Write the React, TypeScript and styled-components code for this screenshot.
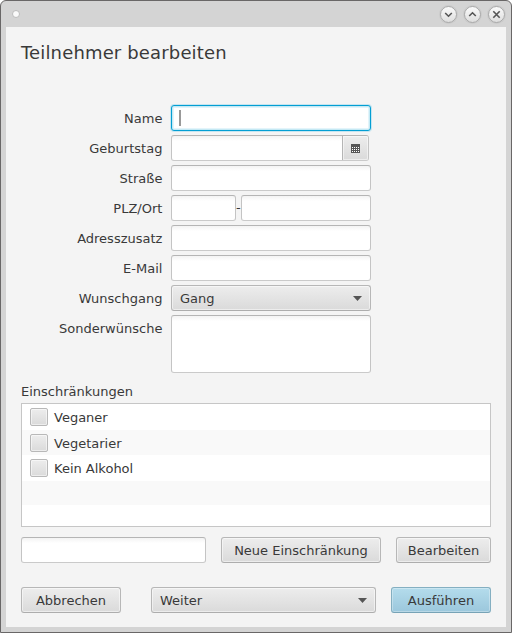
import React from "react";
import styled, { createGlobalStyle, css } from "styled-components";

const GlobalStyle = createGlobalStyle`
  * { box-sizing: border-box; }
  body { margin: 0; background: #fff; overflow: hidden; }
  input, textarea, button { font: inherit; color: inherit; margin: 0; outline: none; }
`;

const Window = styled.div`
  width: 512px;
  height: 633px;
  display: flex;
  flex-direction: column;
  padding: 0 5px 5px;
  background: #d4d4d4;
  border: 1px solid #696767;
  border-radius: 6px 6px 0 0;
  font: 13px/15px "DejaVu Sans", sans-serif;
  color: #393939;
`;

const TitleBar = styled.header`
  height: 26px;
  display: flex;
  align-items: center;
  padding: 0 0 0 6px;
  flex: none;
`;

const MenuDot = styled.span`
  width: 8px;
  height: 8px;
  border-radius: 50%;
  border: 1px solid #bcbcbc;
  background: #fafafa;
  margin-right: auto;
`;

const Controls = styled.div`
  display: flex;
  gap: 7px;
  margin: 1px 1px 0 0;
`;

const RoundButton = styled.button`
  width: 17px;
  height: 17px;
  padding: 0;
  display: flex;
  border: 1px solid #a9a9a9;
  border-radius: 50%;
  background: linear-gradient(#fafafa, #dedede);
  box-shadow: 0 0 0 1px #cbcbcb;

  svg { display: block; width: 15px; height: 15px; }
`;

const Content = styled.main`
  flex: 1;
  display: flex;
  flex-direction: column;
  padding: 0 15px 14px;
  background: #f4f4f4;
`;

const Title = styled.h1`
  margin: 14px 0 0;
  height: 64px;
  font-size: 18px;
  line-height: 23px;
  font-weight: 400;
  letter-spacing: 0.15px;
`;

const Form = styled.div`
  display: grid;
  grid-template-columns: 141.4px 200px;
  grid-template-rows: repeat(7, 26px) 58px;
  column-gap: 8.6px;
  row-gap: 4px;
`;

const Label = styled.label`
  height: 26px;
  padding-top: 1px;
  line-height: 26px;
  text-align: right;
`;

const field = css`
  border: 1px solid;
  border-color: #b5b5b5 #c4c4c4 #cacaca;
  border-radius: 3px;
  background: linear-gradient(#f3f3f3, #fff 5px);
`;

const Input = styled.input<{ $width?: number }>`
  ${field}
  display: block;
  width: ${(p) => (p.$width ? `${p.$width}px` : "100%")};
  height: 26px;
  padding: 0 8px;
`;

const FocusedField = styled.div`
  height: 26px;
  padding: 4px 0 0 7px;
  border: 1px solid #039ed3;
  border-radius: 3px;
  background: #fff;
  box-shadow: 0 0 0 1px #c5e5f0, inset 0 0 0 1px #c5e9f4, inset 0 0 0 2px #e3f4fa;
`;

const Caret = styled.span`
  display: block;
  width: 2px;
  height: 16px;
  background: #999;
`;

const TextArea = styled.textarea`
  ${field}
  display: block;
  width: 200px;
  height: 58px;
  resize: none;
`;

const DatePicker = styled.div`
  ${field}
  width: 198px;
  height: 26px;
  display: flex;
  justify-content: flex-end;
`;

const raised = css`
  background: linear-gradient(#ededed, #dadada);
  box-shadow: inset 0 0 0 1px rgba(255, 255, 255, 0.5);
`;

const CalendarButton = styled.button`
  ${raised}
  width: 26px;
  height: 24px;
  padding: 1px 0 0 8px;
  display: flex;
  align-items: center;
  border: 0;
  border-left: 1px solid #b5b5b5;
  border-radius: 0 2px 2px 0;
`;

const PostalFields = styled.div`
  display: flex;
  line-height: 25px;
`;

const Dash = styled.span`
  width: 5px;
`;

const Button = styled.button<{ $width: number; $primary?: boolean }>`
  ${raised}
  flex: none;
  width: ${(p) => p.$width}px;
  height: 26px;
  padding: 1px 0 0;
  border: 1px solid;
  border-color: #b7b7b7 #b7b7b7 #adadad;
  border-radius: 3px;
  line-height: 23px;
  text-align: center;
  white-space: nowrap;
  ${(p) =>
    p.$primary &&
    css`
      background: linear-gradient(#b4dcec, #9bc7dc);
      border-color: #84afc1 #84afc1 #77a3b6;
      box-shadow: inset 0 0 0 1px rgba(255, 255, 255, 0.3);
    `}
`;

const Combo = styled(Button)`
  display: flex;
  align-items: center;
  justify-content: space-between;
  padding: 1px 8px 0;
`;

const SectionLabel = styled.div`
  margin-top: 11px;
  height: 19px;
`;

const List = styled.div`
  height: 124px;
  flex: none;
  display: grid;
  grid-template-rows: 26px 25px 26px 24px 21px;
  border: 1px solid #c6c6c6;
`;

const ListRow = styled.label`
  display: flex;
  align-items: flex-start;
  gap: 6px;
  padding: 4px 8px 0;
  line-height: 19px;
  background: #fff;
  &:nth-child(even) { background: #f9f9f9; }
`;

const CheckBox = styled.span`
  ${raised}
  width: 18px;
  height: 18px;
  border: 1px solid #b8b8b8;
  border-radius: 2px;
`;

const AddRow = styled.div`
  display: flex;
  gap: 15px;
  margin-top: 10px;
`;

const Footer = styled.footer`
  display: flex;
  gap: 15px;
  margin-top: auto;
`;

const StepCombo = styled(Combo)`
  margin-left: 15px;
`;

const Glyph = ({ d }: { d: string }) => (
  <svg viewBox="0 0 15 15" fill="none" stroke="#555" strokeWidth="1.6">
    <path d={d} />
  </svg>
);

const Arrow = () => (
  <svg width="9" height="5" viewBox="0 0 9 5">
    <path d="M0 0H9L4.5 5Z" fill="#555" />
  </svg>
);

const Calendar = () => (
  <svg width="9" height="9" viewBox="0 0 9 9" shapeRendering="crispEdges">
    <path d="M0 0H9V9H0Z" fill="#555" />
    {[3, 5, 7].map((y) =>
      [1, 3, 5, 7].map((x) => <rect key={`${x}-${y}`} x={x} y={y} width="1" height="1" fill="#fff" />)
    )}
  </svg>
);

const restrictions = ["Veganer", "Vegetarier", "Kein Alkohol", "", ""];

export default function App() {
  return (
    <>
      <GlobalStyle />
      <Window>
        <TitleBar>
          <MenuDot />
          <Controls>
            <RoundButton><Glyph d="M4.2 6L7.5 9.2L10.8 6" /></RoundButton>
            <RoundButton><Glyph d="M4.2 9L7.5 5.8L10.8 9" /></RoundButton>
            <RoundButton><Glyph d="M4.3 4.3L10.7 10.7M10.7 4.3L4.3 10.7" /></RoundButton>
          </Controls>
        </TitleBar>
        <Content>
          <Title>Teilnehmer bearbeiten</Title>
          <Form>
            <Label>Name</Label>
            <FocusedField><Caret /></FocusedField>
            <Label>Geburtstag</Label>
            <DatePicker><CalendarButton><Calendar /></CalendarButton></DatePicker>
            <Label>Straße</Label>
            <Input />
            <Label>PLZ/Ort</Label>
            <PostalFields>
              <Input $width={65} />
              <Dash>-</Dash>
              <Input $width={130} />
            </PostalFields>
            <Label>Adresszusatz</Label>
            <Input />
            <Label>E-Mail</Label>
            <Input />
            <Label>Wunschgang</Label>
            <Combo $width={200}>Gang<Arrow /></Combo>
            <Label>Sonderwünsche</Label>
            <TextArea />
          </Form>
          <SectionLabel>Einschränkungen</SectionLabel>
          <List>
            {restrictions.map((name, i) => (
              <ListRow key={i}>{name && <><CheckBox />{name}</>}</ListRow>
            ))}
          </List>
          <AddRow>
            <Input $width={185} />
            <Button $width={160}>Neue Einschränkung</Button>
            <Button $width={95}>Bearbeiten</Button>
          </AddRow>
          <Footer>
            <Button $width={100}>Abbrechen</Button>
            <StepCombo $width={225}>Weiter<Arrow /></StepCombo>
            <Button $width={100} $primary>Ausführen</Button>
          </Footer>
        </Content>
      </Window>
    </>
  );
}
